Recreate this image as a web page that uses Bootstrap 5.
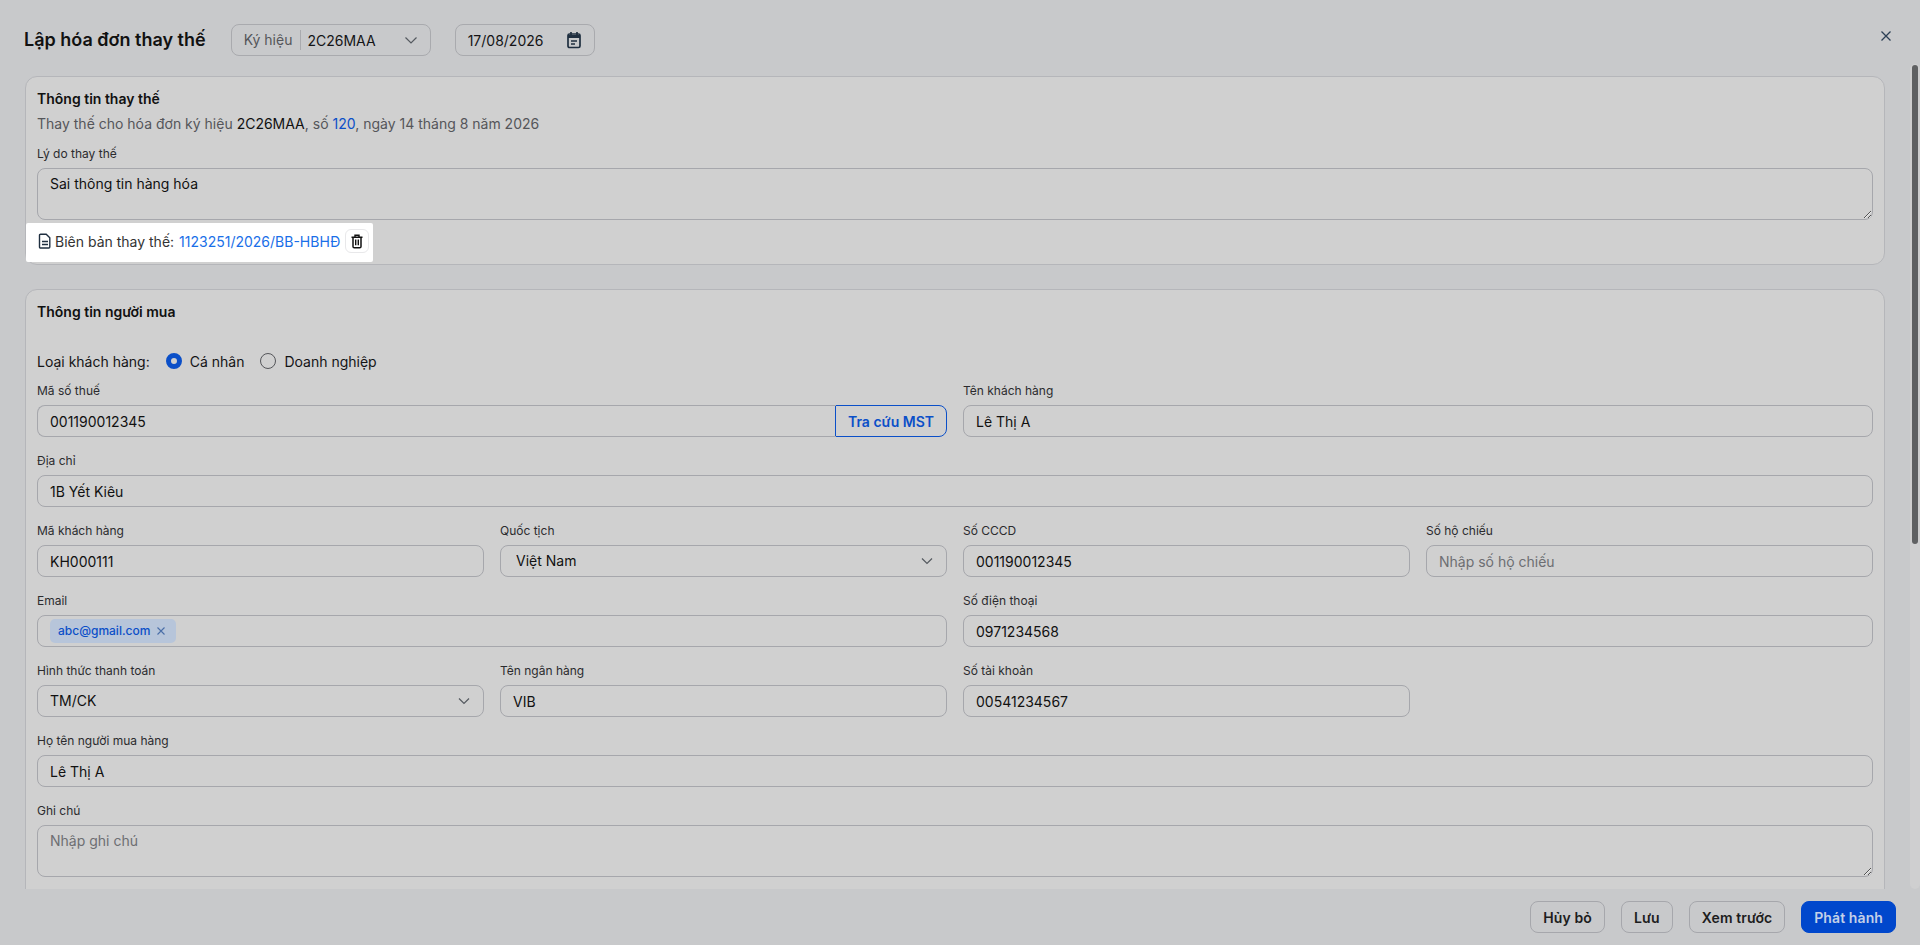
<!DOCTYPE html>
<html lang="en">
<head>
  <meta charset="UTF-8">
  <meta name="viewport" content="width=device-width, initial-scale=1.0">
  <title>Lập hóa đơn thay thế</title>
  <link href="https://cdn.jsdelivr.net/npm/bootstrap@5.3.0/dist/css/bootstrap.min.css" rel="stylesheet">
  <style>
    html, body { height: 100%; }
    body {
      background-color: #c8c9cb;
      color: #141416;
      font-family: Inter, "Liberation Sans", sans-serif;
      font-size: 14px;
      overflow: hidden;
    }
    .inv-shell { height: 945px; }
    .inv-head { height: 64px; padding: 16px 24px 0; flex: none; }
    .inv-title { font-size: 18px; font-weight: 600; margin: 0 25px 0 0; color: #111; }
    .inv-scroll {
      flex: 1 1 auto;
      min-height: 0;
      overflow: hidden;
      padding: 12px 35px 0 25px;
    }
    .inv-foot { height: 56px; flex: none; padding: 0 24px; }

    /* scrollbar of the modal body */
    .bar-track {
      position: absolute;
      top: 64px;
      right: 0;
      width: 10px;
      height: 825px;
      background: #cfcfd0;
      border-radius: 5px;
    }
    .bar-thumb {
      position: absolute;
      top: 1px;
      left: 2px;
      width: 6px;
      height: 479px;
      background: #606163;
      border-radius: 3px;
    }

    .sec-box {
      background: #d0d0d0;
      border: 1px solid #b5b6ba;
      border-radius: 12px;
      padding: 11px;
      margin-bottom: 24px;
    }
    .sec-box.is-short { padding-bottom: 2px; }
    .sec-title { font-size: 14px; font-weight: 600; line-height: 22px; margin: 0; color: #111; }
    .sec-sub { line-height: 22px; color: #55565a; margin-top: 3px; }
    .sec-sub b { font-weight: 400; color: #111; }
    .sec-sub a { color: #0b4fc8; text-decoration: none; }

    .fld { margin-bottom: 14px; }
    .fld-label { display: block; font-size: 12px; line-height: 18px; padding-top: 1px; margin-bottom: 5px; color: #2b2b2e; }
    .fld-label.is-first { margin-top: 9px; }
    .fld-input.form-control, .fld-input.form-select {
      height: 32px;
      min-height: 32px;
      padding: 0 12px;
      font-size: 14px;
      line-height: 30px;
      background-color: transparent;
      color: #111;
      border: 1px solid #a6a7ac;
      border-radius: 8px;
      box-shadow: none;
    }
    .fld-input.form-select {
      background-image: url("data:image/svg+xml,%3Csvg xmlns='http://www.w3.org/2000/svg' viewBox='0 0 14 14'%3E%3Cpath d='M2 4.5l5 5 5-5' fill='none' stroke='%23555a60' stroke-width='1.2'/%3E%3C/svg%3E");
      background-position: right 12px center;
      background-size: 14px 14px;
    }
    .fld-input.form-select.is-wide { padding-left: 15px; }
    .fld-input::placeholder { color: #6d6e72; opacity: 1; }
    textarea.fld-input.form-control { height: 52px; padding-top: 4px; line-height: 22px; }
    .mst-btn {
      flex: none;
      width: 112px;
      height: 32px;
      padding: 0;
      font-size: 14px;
      font-weight: 600;
      color: #0b4fc8;
      background: transparent;
      border: 1px solid #0b4fc8;
      border-radius: 0 8px 8px 0;
    }
    .mst-group .fld-input { border-right: 0; border-radius: 8px 0 0 8px !important; }

    .att-row {
      display: inline-flex;
      align-items: center;
      background: #fff;
      height: 39px;
      margin: 3px 0 0 -11px;
      padding: 0 4px 3px 12px;
      border-radius: 2px;
      color: #333;
    }
    .att-row svg.att-doc { margin-right: 3px; }
    .att-row a { color: #1a6fe8; text-decoration: none; margin-left: 5px; }
    .att-del {
      width: 24px; height: 24px; padding: 0; margin-left: 5px;
      display: inline-flex; align-items: center; justify-content: center;
      background: #fff; border: 1px solid #e8e8ea; border-radius: 6px;
    }

    .cust-type { height: 22px; margin: 27px 0 9px; }
    .cust-radio { width: 16px; height: 16px; border-radius: 50%; border: 1px solid #55565a; flex: none; }
    .cust-radio.is-on { border: 5px solid #0b4fc8; background: #d0d0d0; }

    .mail-box {
      height: 32px;
      display: flex;
      align-items: center;
      padding: 0 12px;
      border: 1px solid #a6a7ac;
      border-radius: 8px;
    }
    .mail-tag {
      display: inline-flex; align-items: center; gap: 6px;
      height: 24px; padding: 0 10px 0 8px;
      font-size: 12px; font-weight: 500;
      color: #0b4fc8; background: #b7c5da; border-radius: 5px;
    }

    .top-ctl {
      height: 32px;
      border: 1px solid #a9aaae;
      border-radius: 8px;
      display: flex;
      align-items: center;
    }
    .top-sel { width: 200px; padding: 0 12px; margin-right: 24px; }
    .top-sel .lbl { color: #55565a; padding-right: 8px; border-right: 1px solid #a9aaae; line-height: 20px; }
    .top-sel .val { padding-left: 6px; flex-grow: 1; }
    .top-date { width: 140px; padding: 0 12px; justify-content: space-between; }

    .foot-btn {
      height: 32px;
      padding: 0 12px;
      font-size: 14px;
      font-weight: 600;
      letter-spacing: .1px;
      color: #1d1d20;
      background: transparent;
      border: 1px solid #a6a7ac;
      border-radius: 8px;
    }
    .foot-btn.is-main { color: #c3d0e8; background: #0047cc; border-color: #0047cc; }
    .close-x { position: absolute; top: 30px; right: 28px; padding: 0; background: none; border: 0; line-height: 0; }
  </style>
</head>
<body>
  <div class="inv-shell d-flex flex-column position-relative">
    <button class="close-x" type="button" aria-label="Đóng">
      <svg width="12" height="12" viewBox="0 0 12 12"><path d="M1.5 1.5l9 9M10.5 1.5l-9 9" stroke="#2b3f55" stroke-width="1.3" fill="none"/></svg>
    </button>
    <div class="bar-track"><div class="bar-thumb"></div></div>

    <div class="inv-head d-flex align-items-center">
      <h1 class="inv-title">Lập hóa đơn thay thế</h1>
      <div class="top-ctl top-sel">
        <span class="lbl">Ký hiệu</span>
        <span class="val">2C26MAA</span>
        <svg width="14" height="14" viewBox="0 0 14 14"><path d="M1.500 4.500l5.500 5.500 5.500-5.500" fill="none" stroke="#555a60" stroke-width="1.200"/></svg>
      </div>
      <div class="top-ctl top-date">
        <span>17/08/2026</span>
        <svg width="16" height="18" viewBox="0 0 16 18" fill="none"><rect x="2" y="3" width="12" height="13.500" rx="1.500" stroke="#1f2f40" stroke-width="1.700"/><path d="M2 5.500h12" stroke="#1f2f40" stroke-width="3"/><path d="M5 1v3M11 1v3" stroke="#1f2f40" stroke-width="1.700"/><path d="M5 10h6M5 13h4" stroke="#1f2f40" stroke-width="1.300"/></svg>
      </div>
    </div>

    <div class="inv-scroll">
      <div class="sec-box is-short">
        <h2 class="sec-title">Thông tin thay thế</h2>
        <div class="sec-sub">Thay thế cho hóa đơn ký hiệu <b>2C26MAA</b>, số <a href="#">120</a>, ngày 14 tháng 8 năm 2026</div>
        <label class="fld-label is-first">Lý do thay thế</label>
        <textarea class="form-control fld-input" rows="2">Sai thông tin hàng hóa</textarea>
        <div class="att-row">
          <svg class="att-doc" width="14" height="16" viewBox="0 0 14 16" fill="none"><path d="M2.500 1.200h5.700l3.600 3.600V14a1 1 0 0 1-1 1H2.500a1 1 0 0 1-1-1V2.200a1 1 0 0 1 1-1z" stroke="#1f2f40" stroke-width="1.400"/><path d="M4 8.500h6M4 11.500h6" stroke="#1f2f40" stroke-width="1.300"/></svg>
          <span>Biên bản thay thế:</span>
          <a href="#">1123251/2026/BB-HBHĐ</a>
          <button class="att-del" type="button" aria-label="Xóa">
            <svg width="14" height="15" viewBox="0 0 14 15" fill="none"><path d="M1.500 3.200h11M5 3V1.200h4V3" stroke="#111" stroke-width="1.400"/><path d="M3 3.200v9.300a1.300 1.300 0 0 0 1.300 1.300h5.400a1.300 1.300 0 0 0 1.300-1.300V3.200" stroke="#111" stroke-width="1.500"/><path d="M5.700 5.500v5.800M8.300 5.500v5.800" stroke="#111" stroke-width="1.400"/></svg>
          </button>
        </div>
      </div>

      <div class="sec-box">
        <h2 class="sec-title">Thông tin người mua</h2>
        <div class="cust-type d-flex align-items-center">
          <span class="me-3">Loại khách hàng:</span>
          <span class="cust-radio is-on"></span><span class="ms-2 me-3">Cá nhân</span>
          <span class="cust-radio"></span><span class="ms-2">Doanh nghiệp</span>
        </div>
        <div class="row gx-3">
          <div class="col-6 fld">
            <label class="fld-label">Mã số thuế</label>
            <div class="input-group mst-group">
              <input class="form-control fld-input" value="001190012345">
              <button class="mst-btn" type="button">Tra cứu MST</button>
            </div>
          </div>
          <div class="col-6 fld">
            <label class="fld-label">Tên khách hàng</label>
            <input class="form-control fld-input" value="Lê Thị A">
          </div>
          <div class="col-12 fld">
            <label class="fld-label">Địa chỉ</label>
            <input class="form-control fld-input" value="1B Yết Kiêu">
          </div>
          <div class="col-3 fld">
            <label class="fld-label">Mã khách hàng</label>
            <input class="form-control fld-input" value="KH000111">
          </div>
          <div class="col-3 fld">
            <label class="fld-label">Quốc tịch</label>
            <select class="form-select fld-input is-wide"><option>Việt Nam</option></select>
          </div>
          <div class="col-3 fld">
            <label class="fld-label">Số CCCD</label>
            <input class="form-control fld-input" value="001190012345">
          </div>
          <div class="col-3 fld">
            <label class="fld-label">Số hộ chiếu</label>
            <input class="form-control fld-input" placeholder="Nhập số hộ chiếu">
          </div>
          <div class="col-6 fld">
            <label class="fld-label">Email</label>
            <div class="mail-box">
              <span class="mail-tag">abc@gmail.com
                <svg width="10" height="10" viewBox="0 0 10 10"><path d="M1.500 1.500l7 7M8.500 1.500l-7 7" stroke="#4a6ea8" stroke-width="1.100"/></svg>
              </span>
            </div>
          </div>
          <div class="col-6 fld">
            <label class="fld-label">Số điện thoại</label>
            <input class="form-control fld-input" value="0971234568">
          </div>
          <div class="col-3 fld">
            <label class="fld-label">Hình thức thanh toán</label>
            <select class="form-select fld-input"><option>TM/CK</option></select>
          </div>
          <div class="col-3 fld">
            <label class="fld-label">Tên ngân hàng</label>
            <input class="form-control fld-input" value="VIB">
          </div>
          <div class="col-3 fld">
            <label class="fld-label">Số tài khoản</label>
            <input class="form-control fld-input" value="00541234567">
          </div>
          <div class="col-3"></div>
          <div class="col-12 fld">
            <label class="fld-label">Họ tên người mua hàng</label>
            <input class="form-control fld-input" value="Lê Thị A">
          </div>
          <div class="col-12 fld">
            <label class="fld-label">Ghi chú</label>
            <textarea class="form-control fld-input" rows="2" placeholder="Nhập ghi chú"></textarea>
          </div>
        </div>
      </div>
    </div>

    <div class="inv-foot d-flex align-items-center justify-content-end gap-3">
      <button class="foot-btn" type="button">Hủy bỏ</button>
      <button class="foot-btn" type="button">Lưu</button>
      <button class="foot-btn" type="button">Xem trước</button>
      <button class="foot-btn is-main" type="button">Phát hành</button>
    </div>
  </div>
  <script src="https://cdn.jsdelivr.net/npm/bootstrap@5.3.0/dist/js/bootstrap.bundle.min.js"></script>
</body>
</html>
